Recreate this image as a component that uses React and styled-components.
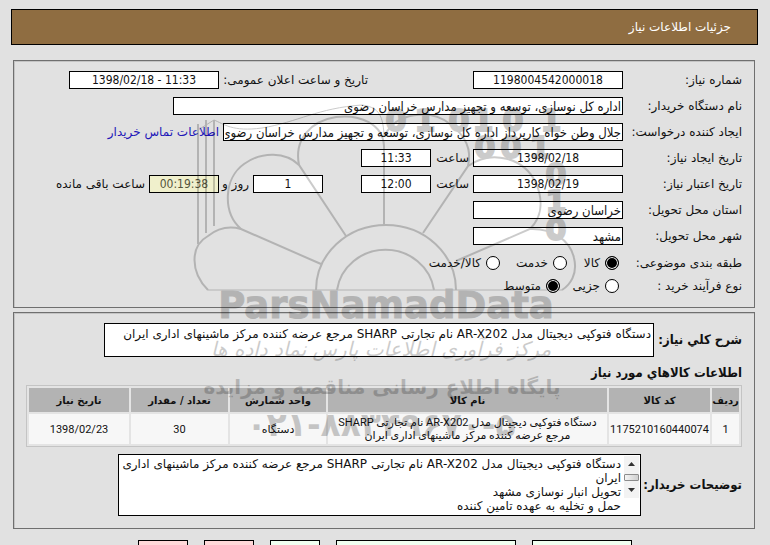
import React, { useState } from 'react';
import styled, { createGlobalStyle } from 'styled-components';

const condensed = "'DejaVu Sans Condensed', 'DejaVu Sans', sans-serif";

const GlobalStyle = createGlobalStyle`
  * {
    box-sizing: border-box;
  }
  body {
    margin: 0;
    background: #e1e1e1;
    color: #111;
    font: 12px/16px 'DejaVu Sans', sans-serif;
    overflow: hidden;
  }
  input, textarea, button {
    font: inherit;
    color: inherit;
  }
`;

const Page = styled.div`
  position: relative;
  height: 100vh;
  overflow: hidden;
  padding: 9px 12px 0 11px;
`;

const Header = styled.header`
  background: #8f6d41;
  border: 1px solid #000;
  padding: 9px 26px;
`;

const HeaderTitle = styled.h1`
  margin: 0;
  color: #fff;
  font-size: 12px;
  font-weight: normal;
  line-height: 16px;
`;

const Panel = styled.section`
  margin: ${(p) => p.$top}px 3px 0 2px;
  padding: ${(p) => p.$pad};
  border: 1px solid #6f6f6f;
  box-shadow: inset 1px 1px #c4c4c4;
`;

const Row = styled.div`
  display: flex;
  align-items: center;
  height: ${(p) => p.$height || 18}px;
  margin-bottom: ${(p) => (p.$height ? 0 : 8)}px;
`;

const Label = styled.label`
  flex: none;
  width: ${(p) => p.$width}px;
  padding-right: ${(p) => p.$indent || 0}px;
  white-space: nowrap;
`;

const Spacer = styled.span`
  flex: none;
  width: ${(p) => p.$width}px;
`;

const Field = styled.input`
  flex: none;
  width: ${(p) => p.$width}px;
  height: 18px;
  padding: 0 1px;
  border: 1px solid #000;
  background: ${(p) => (p.$timer ? '#f0f0cc' : '#fff')};
  color: ${(p) => (p.$timer ? '#55553c' : '#111')};
  font-family: ${condensed};
  font-size: ${(p) => (p.$center ? 12 : 13)}px;
  text-align: ${(p) => (p.$center ? 'center' : 'right')};
  outline: none;
`;

const ContactLink = styled.a`
  margin-right: 4px;
  color: #2116b8;
  text-decoration: none;
  white-space: nowrap;
`;

const Option = styled.label`
  display: flex;
  align-items: center;
  gap: 5px;
  margin-right: 4px;
  width: ${(p) => p.$width}px;
  white-space: nowrap;
`;

const Radio = styled.input`
  appearance: none;
  flex: none;
  width: 14px;
  height: 14px;
  margin: 0;
  border: 1px solid #000;
  border-radius: 50%;
  background: #fff;

  &:checked {
    background: #000;
    box-shadow: inset 0 0 0 1px #fff;
  }
`;

const BlockRow = styled.div`
  display: flex;
  align-items: center;
  margin-top: ${(p) => p.$top || 0}px;
`;

const BoldLabel = styled.label`
  flex: none;
  width: ${(p) => p.$width}px;
  font-family: ${condensed};
  font-size: 13px;
  font-weight: bold;
  white-space: nowrap;
`;

const SummaryBox = styled.textarea`
  display: block;
  width: 550px;
  height: 34px;
  padding: 2px;
  border: 1px solid #000;
  background: #fff;
  line-height: 16px;
  resize: none;
  outline: none;
  overflow: hidden;
`;

const SubTitle = styled.h2`
  margin: 8px 0 4px;
  font-family: ${condensed};
  font-size: 13px;
  line-height: 16px;
`;

const ItemsTable = styled.table`
  width: 100%;
  table-layout: fixed;
  border: 1px solid #c4c4c4;
  border-collapse: separate;
  border-spacing: 2px;
  background: #e4e4e4;
  font-size: 11px;
  line-height: 13px;
  text-align: center;
`;

const HeadCell = styled.th`
  width: ${(p) => p.$width};
  height: 24px;
  padding: 0;
  background: #b3b3b3;
  white-space: nowrap;
  font-size: 10px;
`;

const Cell = styled.td`
  height: 30px;
  padding: 0;
  background: #f7f7f7;
  font-family: Roboto, 'DejaVu Sans', sans-serif;
  white-space: pre;
`;

const NotesBox = styled.div`
  display: flex;
  width: 523px;
  height: 62px;
  padding: 1px;
  border: 1px solid #000;
  background: #fff;
`;

const NotesText = styled.textarea`
  flex: 1;
  height: 60px;
  padding: 1px 3px 1px 0;
  border: 0;
  background: none;
  line-height: 14px;
  white-space: pre;
  resize: none;
  outline: none;
  overflow: hidden;
`;

const Scroll = styled.div`
  display: flex;
  flex-direction: column;
  align-items: center;
  justify-content: space-between;
  width: 15px;
  height: 42px;
  background: #f3f3f3;
`;

const ScrollButton = styled.button`
  width: 15px;
  height: 16px;
  padding: 0;
  border: 0;
  background: none;
  line-height: 0;
`;

const Thumb = styled.span`
  width: 15px;
  height: 7px;
  border: 1px solid #8c8c8c;
  border-radius: 1px;
  background: linear-gradient(90deg, #f4f4f4, #cfcfcf);
`;

const Actions = styled.div`
  display: flex;
  justify-content: center;
  gap: 16px;
  margin: 11px 0 0 1px;
`;

const ActionButton = styled.button`
  flex: none;
  width: ${(p) => p.$width}px;
  height: 24px;
  border: 1px solid #000;
  background: ${(p) => (p.$danger ? '#ffd9d9' : '#f0fff0')};
`;

// lies over the whole form
const Watermark = styled.svg`
  position: absolute;
  top: 90px;
  left: 190px;
  pointer-events: none;
  opacity: 0.2;
`;

const columns = [
  { title: 'ردیف', width: '27px' },
  { title: 'کد کالا', width: '101px' },
  { title: 'نام کالا', width: 'auto' },
  { title: 'واحد شمارش', width: '96px' },
  { title: 'تعداد / مقدار', width: '97px' },
  { title: 'تاریخ نیاز', width: '100px' },
];

const items = [
  ['1', '1175210160440074', 'دستگاه فتوکپی دیجیتال مدل AR-X202 نام تجارتی SHARP\nمرجع عرضه کننده مرکز ماشینهای اداری ایران', 'دستگاه', '30', '1398/02/23'],
];

const summary = 'دستگاه فتوکپی دیجیتال مدل AR-X202 نام تجارتی SHARP مرجع عرضه کننده مرکز ماشینهای اداری ایران';
const notes = 'دستگاه فتوکپی دیجیتال مدل AR-X202 نام تجارتی SHARP مرجع عرضه کننده مرکز ماشینهای اداری\nایران\nتحویل انبار نوسازی مشهد\nحمل و تخلیه به عهده تامین کننده';

const LogoMark = () => (
  <Watermark width="390" height="370" viewBox="190 90 390 370" aria-hidden="true">
    <g fill="none" stroke="#000" strokeWidth="2">
      <path d="M208 290 C190 272 190 246 208 236 C218 228 230 226 241 229 L321 264" />
      <path d="M241 229 C222 212 224 178 244 164 C262 151 286 152 299 165 L346 236" />
      <path d="M299 165 C294 140 310 121 336 117 C360 114 383 124 384 146 V225" />
      <path d="M385 135 C396 113 430 108 450 124 C466 136 472 150 468 166 L423 233" />
      <path d="M468 166 C492 149 524 158 536 183 C544 202 541 218 530 229 L456 261" />
      <path d="M530 229 C552 228 570 240 574 258 C578 274 570 285 562 290" />
      <path d="M208 290 H562" strokeWidth="1" />
      <path d="M316 290 A70 65 0 0 1 456 290" />
      <path d="M337 290 A49 47 0 0 1 434 290" />
      <path d="M198 244 V124 M206 233 V120 M214 226 V120" />
      <path d="M198 130 L214 120 C224 124 232 132 262 128 C298 122 318 108 362 105 C376 107 383 112 384 135" strokeWidth="1" />
    </g>
    <g fontFamily="'DejaVu Sans'" fontWeight="bold" fontSize="30" textAnchor="middle" stroke="#000" strokeWidth="2">
      <text x="396" y="131">0</text>
      <text x="425" y="131">1</text>
      <text x="459" y="131">0</text>
      <text x="483" y="131">1</text>
      <text x="513" y="131">0</text>
      <text x="551" y="131">1</text>
      <text x="485" y="158">0</text>
      <text x="511" y="158">0</text>
      <text x="540" y="158">1</text>
      <text x="556" y="185">0</text>
      <text x="556" y="212">1</text>
      <text x="556" y="240">0</text>
    </g>
    <text x="386" y="318" textAnchor="middle" fontFamily="'DejaVu Sans'" fontWeight="bold" fontSize="37" stroke="#000">ParsNamadData</text>
    <text x="381" y="356" textAnchor="middle" direction="rtl" fontFamily="'DejaVu Sans'" fontStyle="italic" fontSize="20">مرکز فرآوری اطلاعات پارس نماد داده ها</text>
    <text x="382" y="394" textAnchor="middle" direction="rtl" fontFamily="'DejaVu Sans'" fontWeight="bold" fontSize="20">پایگاه اطلاع رسانی مناقصه و مزایده</text>
    <text x="381" y="436" textAnchor="middle" direction="ltr" fontFamily="'DejaVu Sans'" fontWeight="bold" fontSize="33">۰۲۱-۸۸۳۴۹۶۷۰-۵</text>
  </Watermark>
);

const App = () => {
  const [subject, setSubject] = useState('کالا');
  const [process, setProcess] = useState('متوسط');

  return (
    <>
      <GlobalStyle />
      <Page dir="rtl" lang="fa">
        <Header>
          <HeaderTitle>جزئیات اطلاعات نیاز</HeaderTitle>
        </Header>

        <Panel $top={15} $pad="10px 12px 8px">
          <Row>
            <Label htmlFor="number" $width={119}>شماره نیاز:</Label>
            <Field id="number" $width={150} $center defaultValue="1198004542000018" />
            <Spacer $width={105} />
            <Label htmlFor="announce" $width={149}>تاریخ و ساعت اعلان عمومی:</Label>
            <Field id="announce" $width={150} $center dir="ltr" defaultValue="1398/02/18 - 11:33" />
          </Row>
          <Row>
            <Label htmlFor="buyer" $width={119}>نام دستگاه خریدار:</Label>
            <Field id="buyer" $width={450} defaultValue="اداره کل نوسازی، توسعه و تجهیز مدارس خراسان رضوی" />
          </Row>
          <Row>
            <Label htmlFor="creator" $width={119}>ایجاد کننده درخواست:</Label>
            <Field id="creator" $width={400} defaultValue="جلال وطن خواه کارپرداز اداره کل نوسازی، توسعه و تجهیز مدارس خراسان رضوی" />
            <ContactLink href="#contact">اطلاعات تماس خریدار</ContactLink>
          </Row>
          <Row>
            <Label htmlFor="createDate" $width={119}>تاریخ ایجاد نیاز:</Label>
            <Field id="createDate" $width={150} $center defaultValue="1398/02/18" />
            <Label htmlFor="createTime" $width={42} $indent={4}>ساعت</Label>
            <Field id="createTime" $width={70} $center defaultValue="11:33" />
          </Row>
          <Row>
            <Label htmlFor="validDate" $width={119}>تاریخ اعتبار نیاز:</Label>
            <Field id="validDate" $width={150} $center defaultValue="1398/02/19" />
            <Label htmlFor="validTime" $width={42} $indent={4}>ساعت</Label>
            <Field id="validTime" $width={70} $center defaultValue="12:00" />
            <Spacer $width={38} />
            <Field id="days" $width={70} $center defaultValue="1" />
            <Label htmlFor="days" $width={34} $indent={4}>روز و</Label>
            <Field id="remaining" $width={70} $center $timer defaultValue="00:19:38" />
            <Label htmlFor="remaining" $width={100} $indent={4}>ساعت باقی مانده</Label>
          </Row>
          <Row>
            <Label htmlFor="province" $width={119}>استان محل تحویل:</Label>
            <Field id="province" $width={150} defaultValue="خراسان رضوی" />
          </Row>
          <Row>
            <Label htmlFor="city" $width={119}>شهر محل تحویل:</Label>
            <Field id="city" $width={150} defaultValue="مشهد" />
          </Row>
          <Row $height={20} role="radiogroup" aria-label="طبقه بندی موضوعی">
            <Label as="span" $width={119}>طبقه بندی موضوعی:</Label>
            {[['کالا', 48], ['خدمت', 63], ['کالا/خدمت', 90]].map(([name, width]) => (
              <Option key={name} $width={width}>
                <Radio type="radio" name="subject" checked={subject === name} onChange={() => setSubject(name)} />
                {name}
              </Option>
            ))}
          </Row>
          <Row $height={26} role="radiogroup" aria-label="نوع فرآیند خرید">
            <Label as="span" $width={119}>نوع فرآیند خرید :</Label>
            {[['جزیی', 55], ['متوسط', 60]].map(([name, width]) => (
              <Option key={name} $width={width}>
                <Radio type="radio" name="process" checked={process === name} onChange={() => setProcess(name)} />
                {name}
              </Option>
            ))}
          </Row>
        </Panel>

        <Panel $top={4} $pad="10px 12px 12px">
          <BlockRow>
            <BoldLabel htmlFor="summary" $width={88}>شرح کلي نیاز:</BoldLabel>
            <SummaryBox id="summary" defaultValue={summary} />
          </BlockRow>
          <SubTitle>اطلاعات کالاهاي مورد نیاز</SubTitle>
          <ItemsTable>
            <thead>
              <tr>
                {columns.map((c) => (
                  <HeadCell key={c.title} $width={c.width} scope="col">{c.title}</HeadCell>
                ))}
              </tr>
            </thead>
            <tbody>
              {items.map((item) => (
                <tr key={item[1]}>
                  {item.map((value, i) => (
                    <Cell key={i}>{value}</Cell>
                  ))}
                </tr>
              ))}
            </tbody>
          </ItemsTable>
          <BlockRow $top={7}>
            <BoldLabel htmlFor="notes" $width={101}>توضیحات خریدار:</BoldLabel>
            <NotesBox>
              <Scroll>
                <ScrollButton type="button" aria-label="up">
                  <svg width="7" height="4"><path d="M0 4 L3.5 0 L7 4Z" fill="#333" /></svg>
                </ScrollButton>
                <Thumb />
                <ScrollButton type="button" aria-label="down">
                  <svg width="7" height="4"><path d="M0 0 L3.5 4 L7 0Z" fill="#333" /></svg>
                </ScrollButton>
              </Scroll>
              <NotesText id="notes" wrap="off" defaultValue={notes} />
            </NotesBox>
          </BlockRow>
        </Panel>

        <Actions>
          <ActionButton type="button" $width={100} />
          <ActionButton type="button" $width={180} />
          <ActionButton type="button" $width={50} />
          <ActionButton type="button" $width={50} $danger />
          <ActionButton type="button" $width={50} $danger />
        </Actions>
        <LogoMark />
      </Page>
    </>
  );
};

export default App;
